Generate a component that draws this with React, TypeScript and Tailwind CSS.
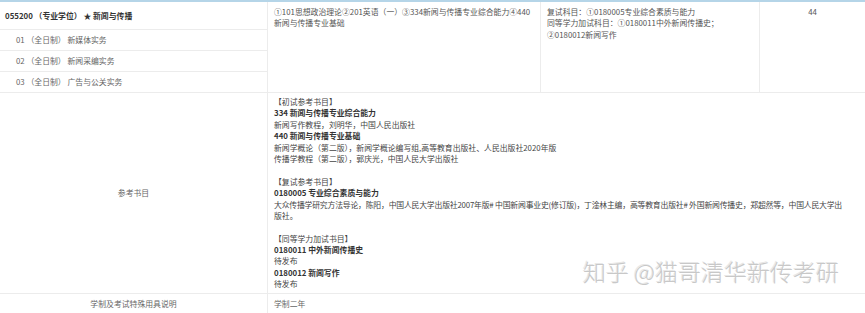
const font = { fontFamily: '"Noto Sans CJK SC", "Noto Sans", sans-serif' };

const subRows = [
  "01 （全日制） 新媒体实务",
  "02 （全日制） 新闻采编实务",
  "03 （全日制） 广告与公关实务",
];

type Line = { text: string; bold?: boolean; tight?: boolean };

const books: Line[] = [
  { text: "【初试参考书目】" },
  { text: "334 新闻与传播专业综合能力", bold: true },
  { text: "新闻写作教程，刘明华，中国人民出版社" },
  { text: "440 新闻与传播专业基础", bold: true },
  { text: "新闻学概论（第二版），新闻学概论编写组,高等教育出版社、人民出版社2020年版" },
  { text: "传播学教程（第二版），郭庆光，中国人民大学出版社" },
  { text: "" },
  { text: "【复试参考书目】" },
  { text: "0180005 专业综合素质与能力", bold: true },
  {
    text: "大众传播学研究方法导论，陈阳，中国人民大学出版社2007年版# 中国新闻事业史(修订版)，丁淦林主编，高等教育出版社# 外国新闻传播史，郑超然等，中国人民大学出",
    tight: true,
  },
  { text: "版社。" },
  { text: "" },
  { text: "【同等学力加试书目】" },
  { text: "0180011 中外新闻传播史", bold: true },
  { text: "待发布" },
  { text: "0180012 新闻写作", bold: true },
  { text: "待发布" },
];

export default function App() {
  return (
    <div
      className="relative w-[865px] h-[313px] overflow-hidden bg-white text-[7.85px] leading-[11.4px] text-[#555]"
      style={font}
    >
      <div className="border-t-2 border-[#b5d5e8] grid grid-cols-[267px_273px_219px_1fr] grid-rows-[28px_21px_21px_21px_201px_20px]">
        <div className="flex items-center pl-[5px] border-b border-[#ececec] font-bold text-[#333]">
          055200 （专业学位） ★ 新闻与传播
        </div>
        <div className="row-span-4 border-l border-b border-[#ececec] pt-[4px] px-[6px] whitespace-nowrap">
          ①101思想政治理论②201英语（一）③334新闻与传播专业综合能力④440
          <br />
          新闻与传播专业基础
        </div>
        <div className="row-span-4 border-l border-b border-[#ececec] pt-[4px] px-[6px] whitespace-nowrap">
          复试科目：①0180005专业综合素质与能力
          <br />
          同等学力加试科目：①0180011中外新闻传播史；
          <br />
          ②0180012新闻写作
        </div>
        <div className="row-span-4 border-l border-b border-[#ececec] pt-[4px] text-center">
          44
        </div>
        {subRows.map((r) => (
          <div
            key={r}
            className="flex items-center pl-[16px] border-b border-[#ececec] text-[#666]"
          >
            {r}
          </div>
        ))}
        <div className="flex items-center justify-center border-b border-[#ececec] text-[#666]">
          参考书目
        </div>
        <div className="col-span-3 border-l border-b border-[#ececec] pt-[3px] pl-[6px] whitespace-nowrap">
          {books.map((l, i) => (
            <div
              key={i}
              className={
                (l.bold ? "h-[11.4px] font-semibold text-[#333]" : "h-[11.4px] text-[#444]") +
                (l.tight ? " tracking-[-0.2px]" : "")
              }
            >
              {l.text}
            </div>
          ))}
        </div>
        <div className="flex items-center justify-center border-b border-[#ececec] text-[#666]">
          学制及考试特殊用具说明
        </div>
        <div className="col-span-3 flex items-center border-l border-b border-[#ececec] pl-[6px] text-[#666]">
          学制二年
        </div>
      </div>
      <div className="absolute left-[583px] top-[256px] text-[23px] leading-[30px] font-light text-[#c8c8c8] whitespace-nowrap [text-shadow:1px_1px_0_#ffffff,-1px_-1px_0_#e8e8e8]">
        知乎 @猫哥清华新传考研
      </div>
    </div>
  );
}
